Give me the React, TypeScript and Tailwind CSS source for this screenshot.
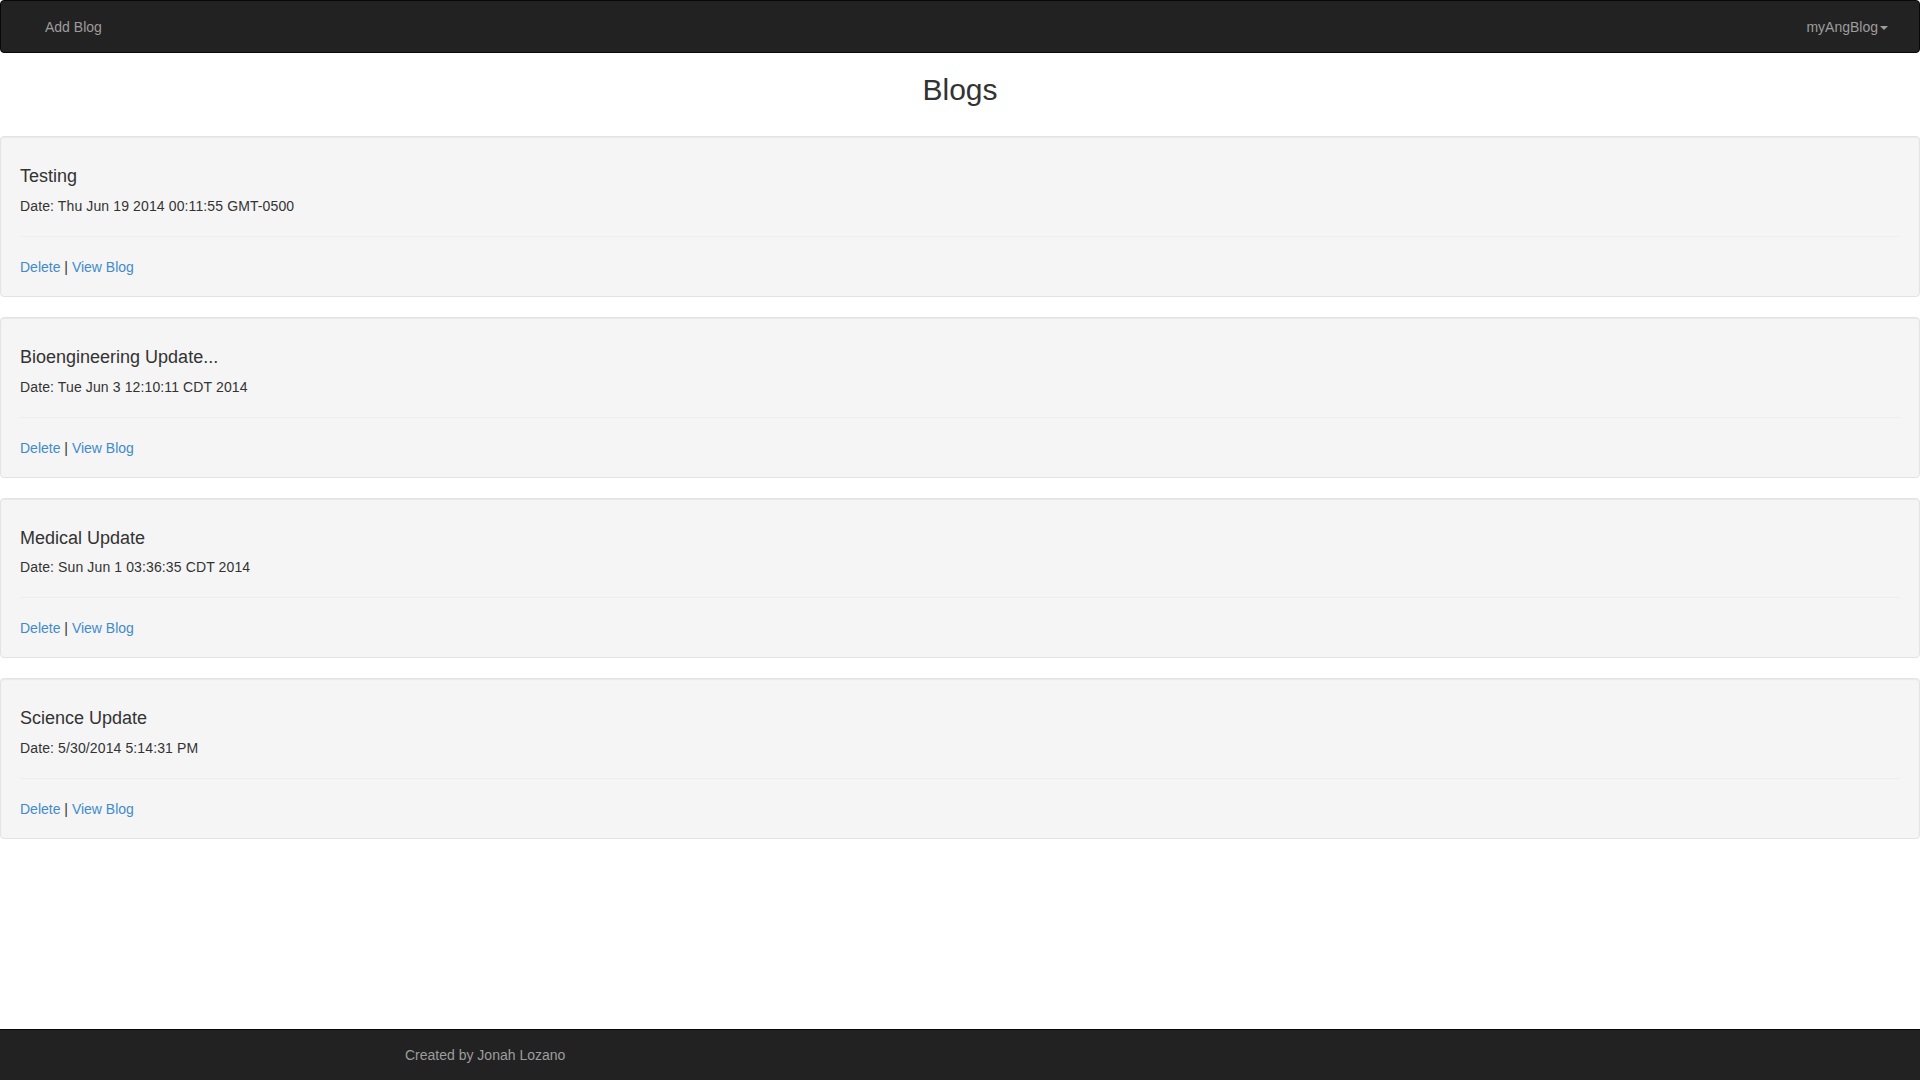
import React from "react";

interface Blog {
  title: string;
  date: string;
}

const blogs: Blog[] = [
  { title: "Testing", date: "Thu Jun 19 2014 00:11:55 GMT-0500" },
  { title: "Bioengineering Update...", date: "Tue Jun 3 12:10:11 CDT 2014" },
  { title: "Medical Update", date: "Sun Jun 1 03:36:35 CDT 2014" },
  { title: "Science Update", date: "5/30/2014 5:14:31 PM" },
];

function BlogCard({ blog }: { blog: Blog }) {
  return (
    <div className="mb-5 rounded border border-[#e3e3e3] bg-[#f5f5f5] p-[19px] shadow-[inset_0_1px_1px_rgba(0,0,0,0.05)]">
      <h4 className="mt-[11px] mb-[9px] text-[18px] leading-[1.1] font-medium text-[#333]">
        {blog.title}
      </h4>
      <p className="text-[14px] leading-5 tracking-[0.12px] text-[#333]">Date: {blog.date}</p>
      <hr className="mt-5 mb-5 border-0 border-t border-[#eee]" />
      <div className="text-[14px] leading-5 text-[#333]">
        <a href="#" className="text-[#428bca] hover:underline">
          Delete
        </a>{" "}
        |{" "}
        <a href="#" className="text-[#428bca] hover:underline">
          View Blog
        </a>
      </div>
    </div>
  );
}

export default function App() {
  return (
    <div className="flex min-h-[1080px] flex-col bg-white font-['Liberation_Sans',Arial,sans-serif] text-[14px] text-[#333]">
      <nav className="flex h-[53px] items-center justify-between rounded border border-[#080808] bg-[#222] pt-[2px] pl-[44px] pr-[31px]">
        <a href="#" className="text-[14px] text-[#9d9d9d] hover:text-white">
          Add Blog
        </a>
        <a href="#" className="flex items-center text-[14px] text-[#9d9d9d] hover:text-white">
          myAngBlog
          <span className="ml-[2px] inline-block h-0 w-0 border-x-4 border-t-4 border-x-transparent border-t-[#9d9d9d]" />
        </a>
      </nav>

      <h2 className="mt-5 mb-[30px] text-center text-[30px] leading-[1.1] font-medium text-[#333]">
        Blogs
      </h2>

      <div className="flex-1">
        {blogs.map((b) => (
          <BlogCard key={b.title} blog={b} />
        ))}
      </div>

      <footer className="flex h-[51px] items-center border-t border-[#080808] bg-[#222]">
        <p className="pl-[405px] text-[14px] text-[#9d9d9d]">Created by Jonah Lozano</p>
      </footer>
    </div>
  );
}
